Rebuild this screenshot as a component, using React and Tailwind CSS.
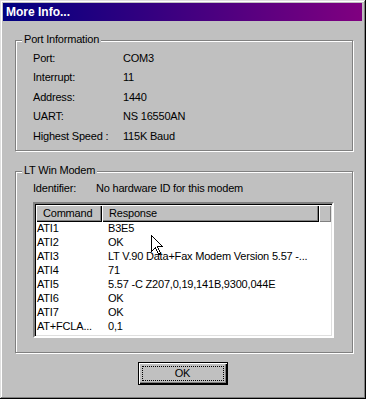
import React from "react";

const font = { fontFamily: '"Liberation Sans", Arial, sans-serif' };

function Group({ label, className, children }) {
  return (
    <div className={"relative border border-[#808080] shadow-[inset_1px_1px_#fff,1px_1px_#fff] " + className}>
      <div className="absolute -top-[8px] left-[6px] bg-[#c0c0c0] px-[2px] leading-[13px]">{label}</div>
      {children}
    </div>
  );
}

const rows = [
  ["ATI1", "B3E5"],
  ["ATI2", "OK"],
  ["ATI3", "LT V.90 Data+Fax Modem Version 5.57 -..."],
  ["ATI4", "71"],
  ["ATI5", "5.57 -C Z207,0,19,141B,9300,044E"],
  ["ATI6", "OK"],
  ["ATI7", "OK"],
  ["AT+FCLA...", "0,1"],
];

const info = [
  ["Port:", "COM3"],
  ["Interrupt:", "11"],
  ["Address:", "1440"],
  ["UART:", "NS 16550AN"],
  ["Highest Speed :", "115K Baud"],
];

export default function App() {
  return (
    <div
      style={font}
      className="w-[366px] h-[399px] bg-[#c0c0c0] text-[11px] tracking-[-0.2px] text-black p-[3px] shadow-[inset_-1px_-1px_#000,inset_1px_1px_#dfdfdf,inset_-2px_-2px_#808080,inset_2px_2px_#fff] flex flex-col"
    >
      <div className="h-[18px] w-[359px] bg-[linear-gradient(to_right,#000080,#800080)] flex items-center pl-[3px]">
        <span className="text-white font-bold text-[12px] tracking-normal leading-none">More Info...</span>
      </div>

      <Group label="Port Information" className="ml-[12px] mt-[19px] w-[338px] h-[111px] pt-[7px] pl-[17px]">
        <div className="flex flex-col">
          {info.map(([k, v]) => (
            <div key={k} className="h-[19.5px] flex items-center">
              <span className="w-[90px]">{k}</span>
              <span>{v}</span>
            </div>
          ))}
        </div>
      </Group>

      <Group label="LT Win Modem" className="ml-[12px] mt-[20px] w-[338px] h-[182px] pl-[17px]">
        <div className="h-[30px] flex items-center pt-[2px]">
          <span className="w-[63px]">Identifier:</span>
          <span>No hardware ID for this modem</span>
        </div>
        <div className="relative w-[301px] h-[136px] bg-white border-2 border-t-[#808080] border-l-[#808080] border-b-white border-r-white shadow-[inset_1px_1px_#000,inset_-1px_-1px_#dfdfdf] p-[1px] overflow-hidden">
          <div className="flex h-[17px]">
            <div className="w-[66px] bg-[#c0c0c0] shadow-[inset_1px_1px_#fff,inset_-1px_-1px_#000,inset_-2px_-2px_#808080] pl-[7px] flex items-center">Command</div>
            <div className="w-[217px] bg-[#c0c0c0] shadow-[inset_1px_1px_#fff,inset_-1px_-1px_#000,inset_-2px_-2px_#808080] pl-[7px] flex items-center">Response</div>
            <div className="flex-1 bg-[#c0c0c0] shadow-[inset_1px_1px_#fff,inset_-1px_-1px_#808080]"></div>
          </div>
          <div className="flex flex-col">
            {rows.map(([c, r]) => (
              <div key={c} className="h-[13.9px] flex items-center leading-none">
                <span className="w-[72px] pl-[1px] whitespace-nowrap">{c}</span>
                <span className="whitespace-nowrap">{r}</span>
              </div>
            ))}
          </div>
          <svg className="absolute left-[116px] top-[31px]" width="13" height="21" viewBox="0 0 13 21">
            <path d="M0.5 0.5 L0.5 16.5 L4.5 12.5 L7.5 19.5 L9.5 18.5 L6.5 11.5 L11.5 11.5 Z" fill="#fff" stroke="#000" strokeWidth="1" shapeRendering="crispEdges" />
          </svg>
        </div>
      </Group>

      <div className="flex justify-center mt-[9px] pr-[1px]">
        <div className="w-[90px] h-[23px] border border-black bg-[#c0c0c0] shadow-[inset_1px_1px_#fff,inset_-1px_-1px_#000,inset_-2px_-2px_#808080] p-[3px]">
          <div className="w-full h-full border border-dotted border-black flex items-center justify-center leading-none">OK</div>
        </div>
      </div>
    </div>
  );
}
